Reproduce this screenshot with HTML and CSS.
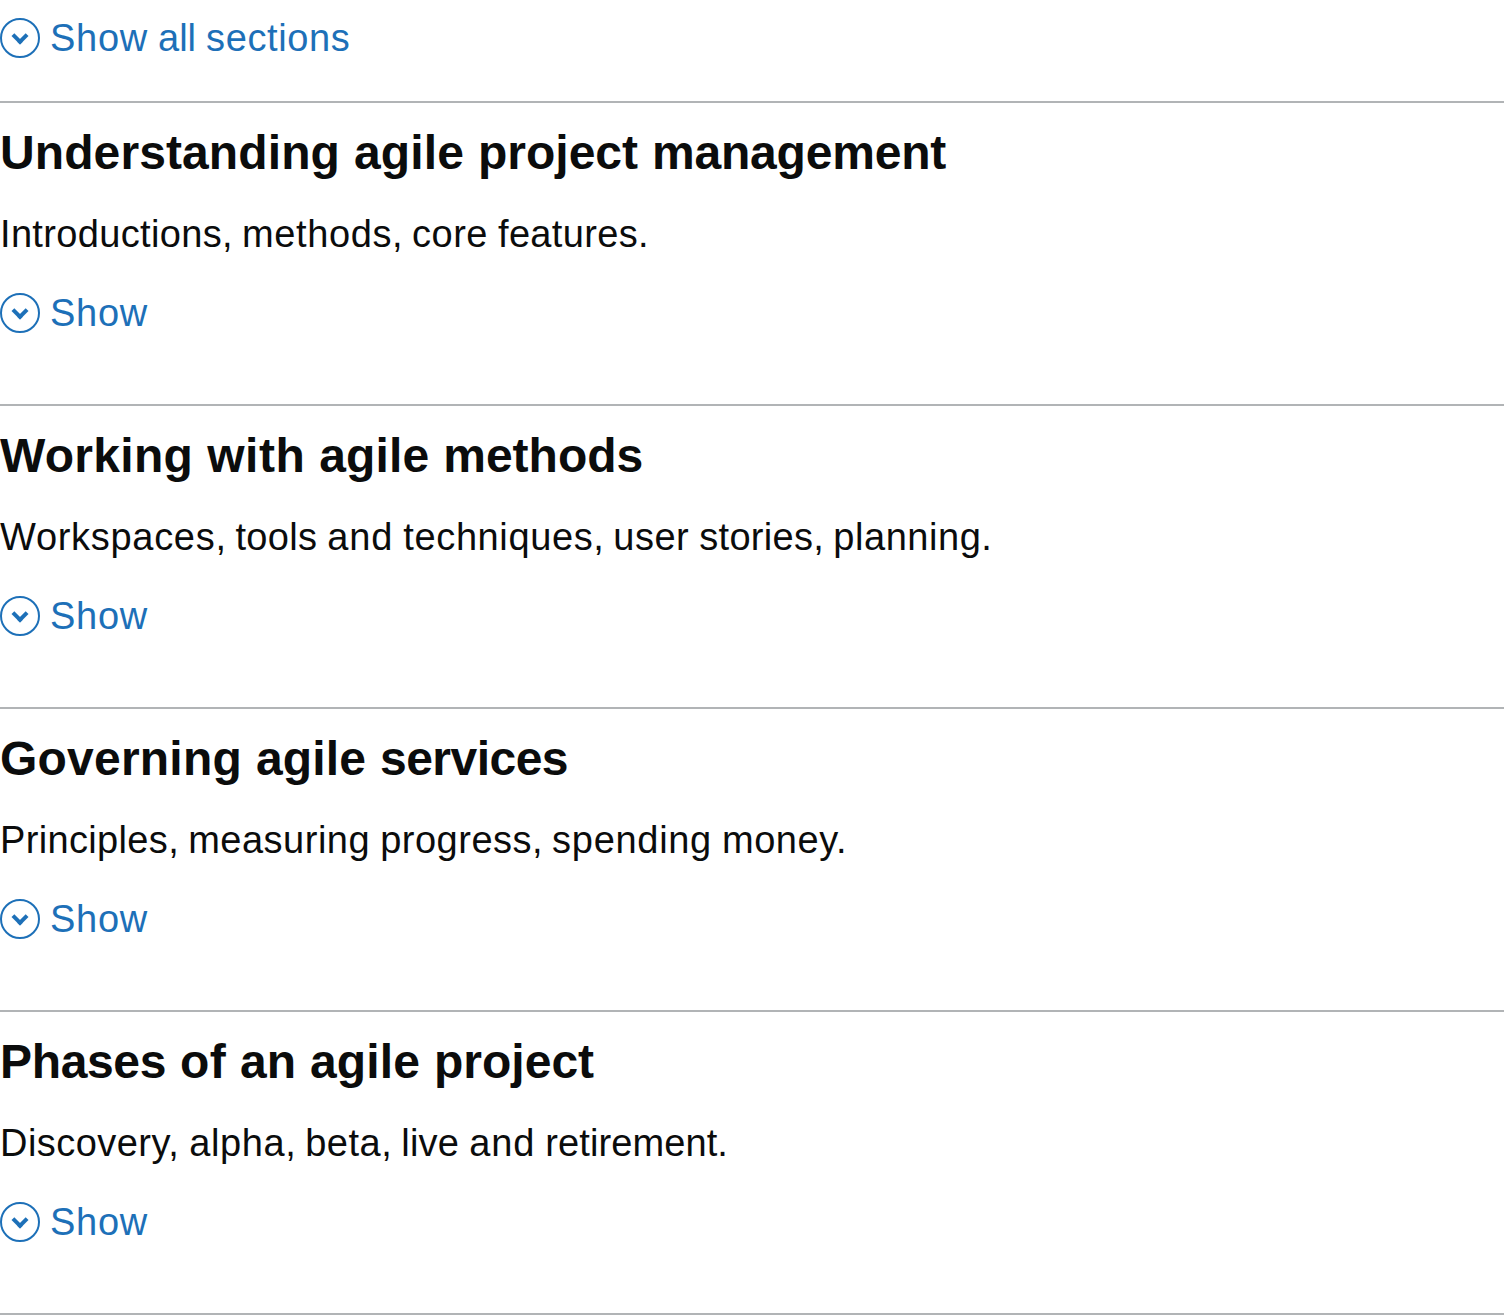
FILE: index.html
```html
<!DOCTYPE html>
<html lang="en">
<head>
<meta charset="utf-8">
<title>Agile delivery</title>
<link rel="stylesheet" href="styles.css">
</head>
<body>
<div class="accordion">
  <button class="toggle toggle-all" type="button"><span class="chevron"></span><span><span class="t75">Show</span> <span class="t0">all</span> <span class="t60">sections</span></span></button>
  <section class="section">
    <h2 class="heading"><span class="t10">Understanding</span> <span class="t12">agile</span> <span class="t0">project</span> <span class="t-20">management</span></h2>
    <p class="summary"><span class="t35">Introductions</span>, <span class="t60">methods</span>, <span class="t50">core</span> <span class="t35">features</span>.</p>
    <button class="toggle" type="button"><span class="chevron"></span><span class="t75">Show</span></button>
  </section>
  <section class="section">
    <h2 class="heading"><span class="t30">Working</span> <span class="t50">with</span> <span class="t12">agile</span> <span class="t0">methods</span></h2>
    <p class="summary"><span class="t70">Workspaces</span>, <span class="t35">tools</span> <span class="t85">and</span> <span class="t60">techniques</span>, <span class="t50">user</span> <span class="t30">stories</span>, <span class="t55">planning</span>.</p>
    <button class="toggle" type="button"><span class="chevron"></span><span class="t75">Show</span></button>
  </section>
  <section class="section">
    <h2 class="heading"><span class="t22">Governing</span> <span class="t12">agile</span> <span class="t-50">services</span></h2>
    <p class="summary"><span class="t35">Principles</span>, <span class="t50">measuring</span> <span class="t50">progress</span>, <span class="t70">spending</span> <span class="t55">money.</span></p>
    <button class="toggle" type="button"><span class="chevron"></span><span class="t75">Show</span></button>
  </section>
  <section class="section">
    <h2 class="heading"><span class="t-35">Phases</span> <span class="t35">of</span> <span class="t0">an</span> <span class="t12">agile</span> <span class="t0">project</span></h2>
    <p class="summary"><span class="t45">Discovery,</span> <span class="t60">alpha</span>, <span class="t50">beta</span>, <span class="t25">live</span> <span class="t85">and</span> <span class="t10">retirement</span>.</p>
    <button class="toggle" type="button"><span class="chevron"></span><span class="t75">Show</span></button>
  </section>
</div>
</body>
</html>
```
FILE: styles.css
```css
body {
  margin: 0;
  background: #fff;
  color: #0b0c0c;
  font-family: "Liberation Sans", Arial, sans-serif;
}

.accordion {
  padding-top: 13px;
  border-bottom: 2px solid #b1b4b6;
}

.toggle {
  display: flex;
  align-items: center;
  gap: 10px;
  height: 50px;
  padding: 0;
  border: 0;
  background: none;
  color: #1d70b8;
  font: 38px/50px "Liberation Sans", Arial, sans-serif;
  letter-spacing: -0.56px;
}

.toggle-all {
  margin-bottom: 38px;
}

.section {
  box-sizing: border-box;
  height: 303px;
  padding-top: 20px;
  border-top: 2px solid #b1b4b6;
}

.heading {
  margin: 0;
  font-size: 48px;
  line-height: 60px;
  letter-spacing: 0.66px;
}

.summary {
  margin: 26px 0 29px;
  font-size: 38px;
  line-height: 50px;
  letter-spacing: -0.56px;
}

.chevron {
  display: flex;
  justify-content: center;
  box-sizing: border-box;
  width: 40px;
  height: 40px;
  padding-top: 10px;
  border: 2px solid;
  border-radius: 50%;
}

.chevron::before {
  content: "";
  box-sizing: border-box;
  width: 12px;
  height: 12px;
  border-top: 4px solid;
  border-right: 4px solid;
  transform: rotate(135deg);
}

/* Word tracking, in hundredths of a pixel */
.t-50 { letter-spacing: -0.52px; }
.t-35 { letter-spacing: -0.35px; }
.t-20 { letter-spacing: -0.2px; }
.t0 { letter-spacing: 0; }
.t10 { letter-spacing: 0.1px; }
.t12 { letter-spacing: 0.12px; }
.t22 { letter-spacing: 0.22px; }
.t25 { letter-spacing: 0.25px; }
.t30 { letter-spacing: 0.3px; }
.t35 { letter-spacing: 0.34px; }
.t45 { letter-spacing: 0.46px; }
.t50 { letter-spacing: 0.51px; }
.t55 { letter-spacing: 0.55px; }
.t60 { letter-spacing: 0.61px; }
.t70 { letter-spacing: 0.7px; }
.t75 { letter-spacing: 0.74px; }
.t85 { letter-spacing: 0.87px; }
```
